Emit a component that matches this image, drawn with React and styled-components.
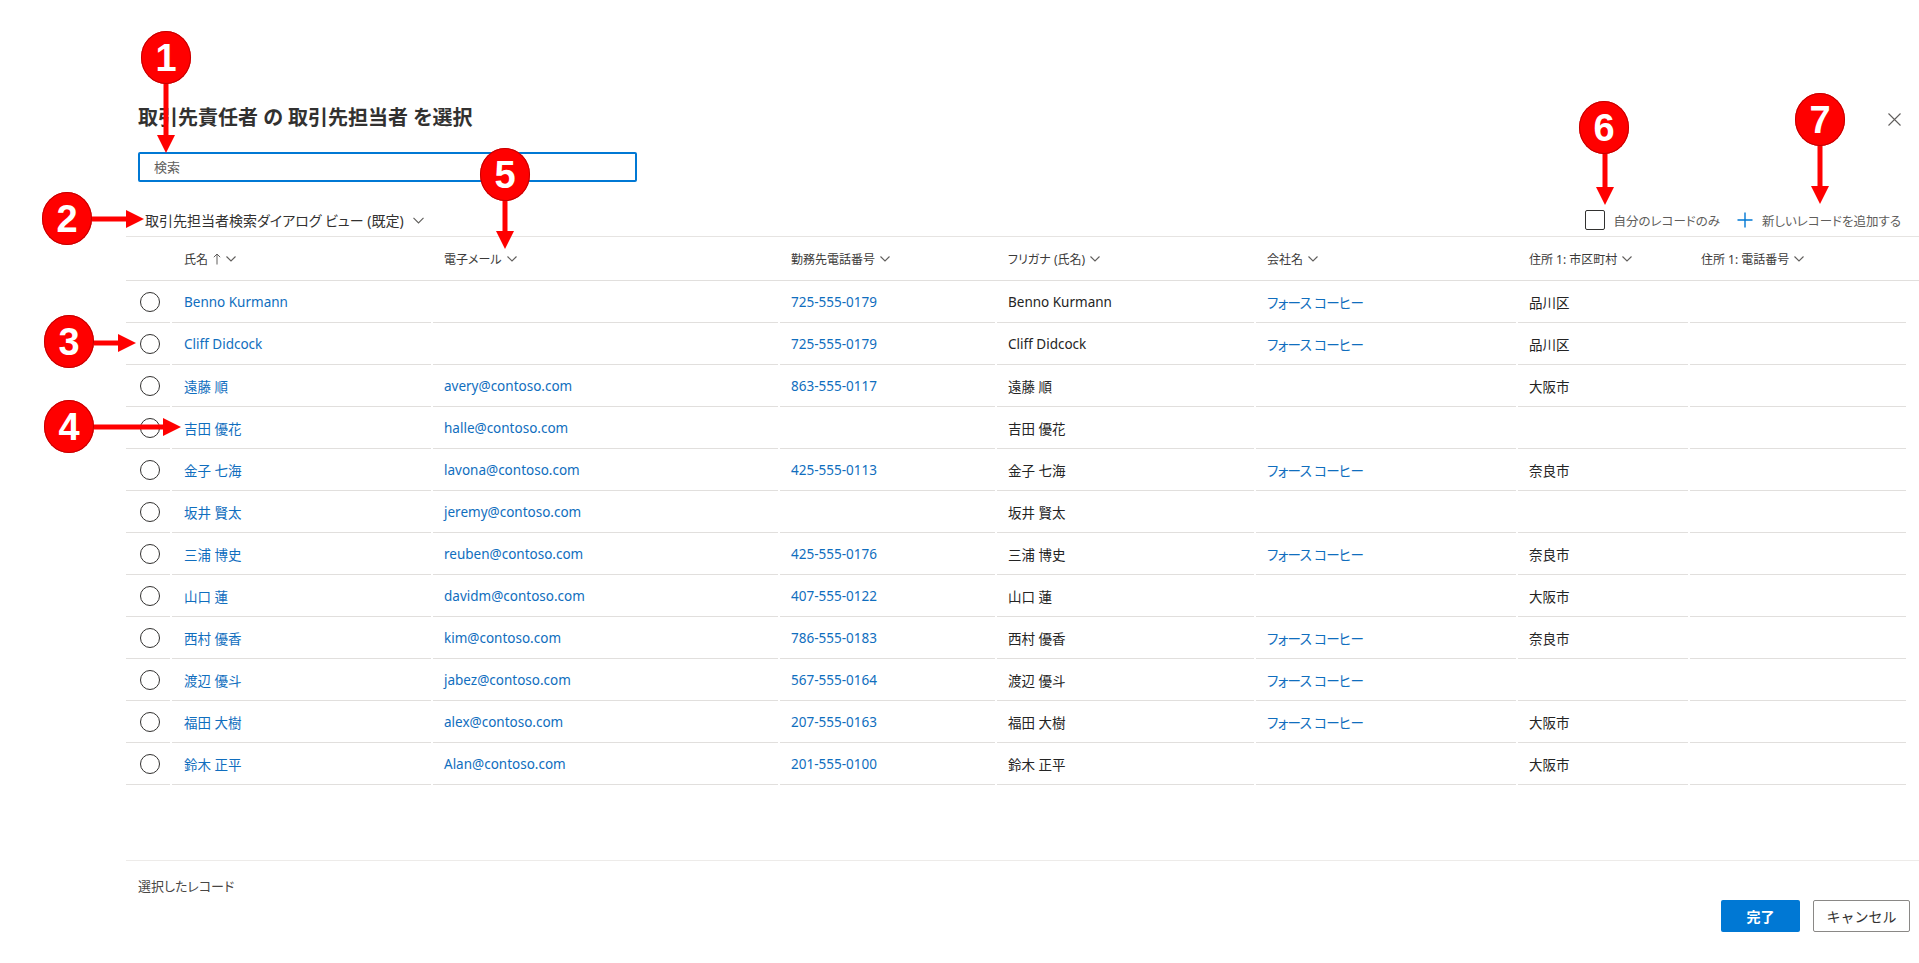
import React from 'react';
import styled, { createGlobalStyle } from 'styled-components';

const GlobalStyle = createGlobalStyle`
  html, body { margin: 0; padding: 0; background: #fff; }
  body {
    font-family: "Noto Sans", "Noto Sans CJK JP", sans-serif;
    color: #323130;
    font-feature-settings: "palt";
  }
  * { box-sizing: border-box; }
`;

const Page = styled.div`
  position: relative;
  width: 1919px;
  height: 963px;
  overflow: hidden;
`;

const Dialog = styled.div`
  height: 100%;
  display: flex;
  flex-direction: column;
  padding: 104px 0 0 126px;
`;

const Head = styled.div`
  padding: 0 18px 0 12px;
`;

const TitleRow = styled.div`
  display: flex;
  align-items: center;
  justify-content: space-between;
  height: 28px;
`;

const Title = styled.h1`
  margin: 0;
  font-size: 20px;
  line-height: 28px;
  font-weight: 700;
  color: #323130;
`;

const CloseBtn = styled.button`
  border: none;
  background: none;
  padding: 0;
  width: 13px;
  height: 13px;
  display: flex;
  margin-top: 2px;
`;

const SearchBox = styled.input`
  margin-top: 20px;
  width: 499px;
  height: 30px;
  border: 2px solid #0078d4;
  border-radius: 2px;
  padding: 0 0 0 14px;
  font-family: inherit;
  font-size: 13px;
  outline: none;
  &::placeholder { color: #605e5c; }
`;

const Toolbar = styled.div`
  margin-top: 22px;
  height: 33px;
  border-bottom: 1px solid #e6e4e2;
  display: flex;
  align-items: center;
  justify-content: space-between;
  padding: 0 18px 0 19px;
`;

const ViewPicker = styled.div`
  display: flex;
  align-items: center;
  gap: 9px;
  font-size: 14px;
  color: #323130;
`;

const ToolGroup = styled.div`
  display: flex;
  align-items: center;
  font-size: 12.5px;
  color: #605e5c;
`;

const CheckBox = styled.span`
  width: 20px;
  height: 20px;
  border: 1px solid #323130;
  border-radius: 2px;
  margin-right: 9px;
`;

const AddRecord = styled.span`
  display: flex;
  align-items: center;
  gap: 9px;
  margin-left: 17px;
`;

const cols = '44px 259px 345px 215px 257px 260px 170px 216px';

const HeaderRow = styled.div`
  display: grid;
  grid-template-columns: ${cols};
  column-gap: 2px;
  height: 44px;
  border-bottom: 1px solid #e1dfdd;
  align-items: center;
`;

const HeadCell = styled.div`
  display: flex;
  align-items: center;
  gap: 5px;
  padding-left: ${p => (p.$first ? 12 : 11)}px;
  font-size: 12px;
  color: #3b3a39;
`;

const Rows = styled.div`
  width: 1780px;
`;

const Row = styled.div`
  display: grid;
  grid-template-columns: ${cols};
  column-gap: 2px;
`;

const Cell = styled.div`
  height: 42px;
  border-bottom: 1px solid #e1dfdd;
  display: flex;
  align-items: center;
  padding-left: ${p => (p.$first ? 12 : 11)}px;
  font-size: 13.5px;
  letter-spacing: ${p => (p.$kana ? '-0.6px' : '0')};
  color: ${p => (p.$link ? '#106ebe' : '#242424')};
  white-space: nowrap;
`;

const RadioCell = styled.div`
  height: 42px;
  border-bottom: 1px solid #e1dfdd;
  display: flex;
  align-items: center;
  padding-left: 14px;
`;

const Radio = styled.span`
  width: 20px;
  height: 20px;
  border-radius: 50%;
  border: 1px solid #323130;
`;

const Footer = styled.div`
  margin-top: auto;
  height: 103px;
  border-top: 1px solid #edebe9;
  padding: 16px 9px 0 12px;
`;

const SelectedLabel = styled.div`
  font-size: 13px;
  line-height: 18px;
  color: #484644;
`;

const ButtonRow = styled.div`
  display: flex;
  justify-content: flex-end;
  gap: 13px;
  margin-top: 5px;
`;

const Button = styled.button`
  height: 32px;
  width: ${p => (p.$primary ? 79 : 97)}px;
  border-radius: 2px;
  font-family: inherit;
  font-size: 14px;
  font-weight: ${p => (p.$primary ? 700 : 400)};
  background: ${p => (p.$primary ? '#0078d4' : '#fff')};
  color: ${p => (p.$primary ? '#fff' : '#323130')};
  border: ${p => (p.$primary ? 'none' : '1px solid #8a8886')};
`;

const Marker = styled.div`
  position: absolute;
  width: 50px;
  height: 53px;
  margin: -26px 0 0 -25px;
  border-radius: 50%;
  background: #ff0000;
  box-shadow: inset 0 0 0 1px #c40000;
  display: flex;
  align-items: center;
  justify-content: center;
  color: #fff;
  font-family: "Liberation Sans", Arial, sans-serif;
  font-weight: 700;
  font-size: 38px;
  line-height: 1;
`;

const Overlay = styled.svg`
  position: absolute;
  left: 0;
  top: 0;
  pointer-events: none;
`;

const Chevron = () => (
  <svg width="10" height="6" viewBox="0 0 10 6">
    <path d="M0.5 0.5 L5 5 L9.5 0.5" fill="none" stroke="#605e5c" strokeWidth="1.1" />
  </svg>
);

const UpArrow = () => (
  <svg width="8" height="12" viewBox="0 0 8 12">
    <path d="M4 11.5 V1 M0.8 4.2 L4 1 L7.2 4.2" fill="none" stroke="#605e5c" strokeWidth="1" />
  </svg>
);

const headers = [
  '氏名', '電子メール', '勤務先電話番号', 'フリガナ (氏名)', '会社名', '住所 1: 市区町村', '住所 1: 電話番号'
];

const FC = 'フォース コーヒー';
const data = [
  ['Benno Kurmann', '', '725-555-0179', 'Benno Kurmann', FC, '品川区'],
  ['Cliff Didcock', '', '725-555-0179', 'Cliff Didcock', FC, '品川区'],
  ['遠藤 順', 'avery@contoso.com', '863-555-0117', '遠藤 順', '', '大阪市'],
  ['吉田 優花', 'halle@contoso.com', '', '吉田 優花', '', ''],
  ['金子 七海', 'lavona@contoso.com', '425-555-0113', '金子 七海', FC, '奈良市'],
  ['坂井 賢太', 'jeremy@contoso.com', '', '坂井 賢太', '', ''],
  ['三浦 博史', 'reuben@contoso.com', '425-555-0176', '三浦 博史', FC, '奈良市'],
  ['山口 蓮', 'davidm@contoso.com', '407-555-0122', '山口 蓮', '', '大阪市'],
  ['西村 優香', 'kim@contoso.com', '786-555-0183', '西村 優香', FC, '奈良市'],
  ['渡辺 優斗', 'jabez@contoso.com', '567-555-0164', '渡辺 優斗', FC, ''],
  ['福田 大樹', 'alex@contoso.com', '207-555-0163', '福田 大樹', FC, '大阪市'],
  ['鈴木 正平', 'Alan@contoso.com', '201-555-0100', '鈴木 正平', '', '大阪市'],
];

// annotation callouts: circle centre and arrow start -> tip
const markers = [
  { n: 1, x: 166, y: 57, a: [166, 82, 166, 153] },
  { n: 2, x: 67, y: 218, a: [92, 219, 144, 219] },
  { n: 3, x: 69, y: 341, a: [94, 343, 136, 343] },
  { n: 4, x: 69, y: 426, a: [94, 427, 181, 427] },
  { n: 5, x: 505, y: 174, a: [505, 199, 505, 249] },
  { n: 6, x: 1604, y: 127, a: [1605, 152, 1605, 205] },
  { n: 7, x: 1820, y: 119, a: [1820, 144, 1820, 204] },
];

function ArrowShape({ a }) {
  const [x1, y1, x2, y2] = a;
  const len = Math.hypot(x2 - x1, y2 - y1);
  const ux = (x2 - x1) / len;
  const uy = (y2 - y1) / len;
  const hl = 18, hw = 9;
  const bx = x2 - ux * hl;
  const by = y2 - uy * hl;
  const pts = `${x2},${y2} ${bx - uy * hw},${by + ux * hw} ${bx + uy * hw},${by - ux * hw}`;
  return (
    <g>
      <line x1={x1} y1={y1} x2={bx} y2={by} stroke="#ff0000" strokeWidth="5" />
      <polygon points={pts} fill="#ff0000" />
    </g>
  );
}

export default function App() {
  return (
    <Page>
      <GlobalStyle />
      <Dialog>
        <Head>
          <TitleRow>
            <Title>取引先責任者 の 取引先担当者 を選択</Title>
            <CloseBtn aria-label="閉じる">
              <svg width="13" height="13" viewBox="0 0 13 13">
                <path d="M0.5 0.5 L12.5 12.5 M12.5 0.5 L0.5 12.5" stroke="#605e5c" strokeWidth="1.1" />
              </svg>
            </CloseBtn>
          </TitleRow>
          <SearchBox placeholder="検索" />
        </Head>
        <Toolbar>
          <ViewPicker>
            取引先担当者検索ダイアログ ビュー (既定)
            <svg width="11" height="7" viewBox="0 0 11 7">
              <path d="M0.5 0.8 L5.5 6 L10.5 0.8" fill="none" stroke="#605e5c" strokeWidth="1.1" />
            </svg>
          </ViewPicker>
          <ToolGroup>
            <CheckBox />
            自分のレコードのみ
            <AddRecord>
              <svg width="16" height="16" viewBox="0 0 16 16">
                <path d="M8 0.5 V15.5 M0.5 8 H15.5" stroke="#0078d4" strokeWidth="1.4" />
              </svg>
              新しいレコードを追加する
            </AddRecord>
          </ToolGroup>
        </Toolbar>
        <HeaderRow>
          <div />
          {headers.map((h, i) => (
            <HeadCell key={h} $first={i === 0}>
              {h}
              {i === 0 && <UpArrow />}
              <Chevron />
            </HeadCell>
          ))}
        </HeaderRow>
        <Rows>
          {data.map((r, idx) => (
            <Row key={idx}>
              <RadioCell><Radio /></RadioCell>
              <Cell $first $link>{r[0]}</Cell>
              <Cell $link>{r[1]}</Cell>
              <Cell $link>{r[2]}</Cell>
              <Cell>{r[3]}</Cell>
              <Cell $link $kana>{r[4]}</Cell>
              <Cell>{r[5]}</Cell>
              <Cell />
            </Row>
          ))}
        </Rows>
        <Footer>
          <SelectedLabel>選択したレコード</SelectedLabel>
          <ButtonRow>
            <Button $primary>完了</Button>
            <Button>キャンセル</Button>
          </ButtonRow>
        </Footer>
      </Dialog>
      <Overlay width="1919" height="963">
        {markers.map(m => <ArrowShape key={m.n} a={m.a} />)}
      </Overlay>
      {markers.map(m => (
        <Marker key={m.n} style={{ left: m.x, top: m.y }}>{m.n}</Marker>
      ))}
    </Page>
  );
}
